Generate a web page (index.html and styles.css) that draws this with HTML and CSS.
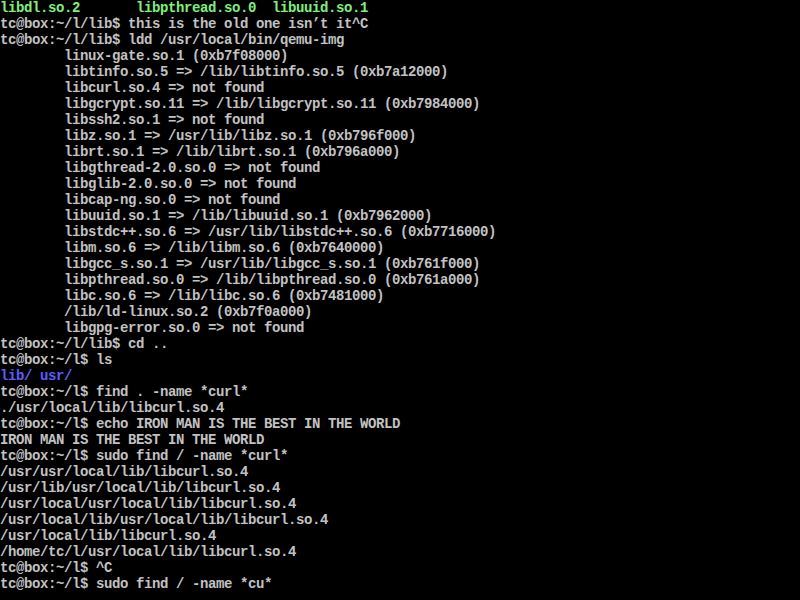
FILE: index.html
```html
<!DOCTYPE html>
<html>
<head>
<meta charset="utf-8">
<link rel="stylesheet" href="styles.css">
</head>
<body>
<pre class="term"><span class="green">libdl.so.2       libpthread.so.0  libuuid.so.1</span>
tc@box:~/l/lib$ this is the old one isn’t it^C
tc@box:~/l/lib$ ldd /usr/local/bin/qemu-img
        linux-gate.so.1 (0xb7f08000)
        libtinfo.so.5 =&gt; /lib/libtinfo.so.5 (0xb7a12000)
        libcurl.so.4 =&gt; not found
        libgcrypt.so.11 =&gt; /lib/libgcrypt.so.11 (0xb7984000)
        libssh2.so.1 =&gt; not found
        libz.so.1 =&gt; /usr/lib/libz.so.1 (0xb796f000)
        librt.so.1 =&gt; /lib/librt.so.1 (0xb796a000)
        libgthread-2.0.so.0 =&gt; not found
        libglib-2.0.so.0 =&gt; not found
        libcap-ng.so.0 =&gt; not found
        libuuid.so.1 =&gt; /lib/libuuid.so.1 (0xb7962000)
        libstdc++.so.6 =&gt; /usr/lib/libstdc++.so.6 (0xb7716000)
        libm.so.6 =&gt; /lib/libm.so.6 (0xb7640000)
        libgcc_s.so.1 =&gt; /usr/lib/libgcc_s.so.1 (0xb761f000)
        libpthread.so.0 =&gt; /lib/libpthread.so.0 (0xb761a000)
        libc.so.6 =&gt; /lib/libc.so.6 (0xb7481000)
        /lib/ld-linux.so.2 (0xb7f0a000)
        libgpg-error.so.0 =&gt; not found
tc@box:~/l/lib$ cd ..
tc@box:~/l$ ls
<span class="blue">lib/</span> <span class="blue">usr/</span>
tc@box:~/l$ find . -name *curl*
./usr/local/lib/libcurl.so.4
tc@box:~/l$ echo IRON MAN IS THE BEST IN THE WORLD
IRON MAN IS THE BEST IN THE WORLD
tc@box:~/l$ sudo find / -name *curl*
/usr/usr/local/lib/libcurl.so.4
/usr/lib/usr/local/lib/libcurl.so.4
/usr/local/usr/local/lib/libcurl.so.4
/usr/local/lib/usr/local/lib/libcurl.so.4
/usr/local/lib/libcurl.so.4
/home/tc/l/usr/local/lib/libcurl.so.4
tc@box:~/l$ ^C
tc@box:~/l$ sudo find / -name *cu*</pre>
</body>
</html>
```

FILE: styles.css
```css
html, body {
  margin: 0;
  padding: 0;
  background: #000;
  width: 800px;
  height: 600px;
  overflow: hidden;
}
.term {
  margin: 0;
  padding: 0;
  font-family: "Liberation Mono", "DejaVu Sans Mono", monospace;
  font-size: 14px;
  letter-spacing: -0.4px;
  line-height: 16px;
  color: #c2c2c2;
  white-space: pre;
  font-weight: bold;
}
.green {
  color: #7ff07f;
}
.blue {
  color: #5c5cff;
}
```
